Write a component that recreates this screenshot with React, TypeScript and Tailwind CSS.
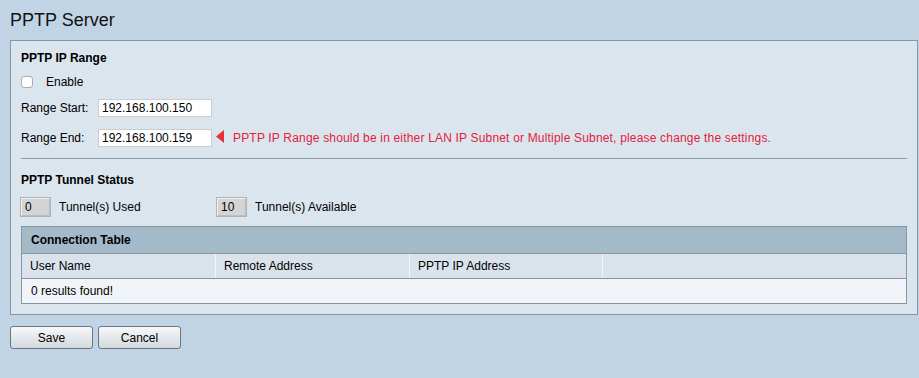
import React from "react";

const font = { fontFamily: '"Liberation Sans", Arial, Helvetica, sans-serif' };

function TextInput({ value }: { value: string }) {
  return (
    <div className="w-[114px] h-[18px] bg-white border border-[#c9cdd1] flex items-center pl-[3px] text-[12px] leading-[14px] text-black">
      {value}
    </div>
  );
}

function ReadBox({ value }: { value: string }) {
  return (
    <div className="w-[29px] h-[18px] bg-[#d4d4d4] border border-[#b9bec3] border-t-[#f2f2f2] border-l-[#f2f2f2] outline outline-1 outline-[#aeb4ba] flex items-center pl-[3px] text-[12px] leading-[14px] text-black">
      {value}
    </div>
  );
}

function Btn({ label }: { label: string }) {
  return (
    <button className="w-[83px] h-[23px] rounded-[3px] border border-[#6b7680] bg-gradient-to-b from-[#f7f8f9] to-[#d3d9de] text-[12px] leading-[14px] text-black">
      {label}
    </button>
  );
}

export default function App() {
  return (
    <div style={font} className="w-[919px] h-[378px] bg-[#c1d4e5] overflow-hidden">
      <h1 className="pl-[10px] pt-[11px] text-[18px] leading-[18px] text-[#111] font-normal">PPTP Server</h1>

      <div className="mt-[11px] ml-[10px] w-[908px] border border-[#8796a2] bg-[#dbe5ee] px-[10px] pt-[10px] pb-[10px] flex flex-col">
        <div className="h-[14px] text-[12px] leading-[14px] font-bold text-black">PPTP IP Range</div>

        <div className="mt-[7px] h-[20px] flex items-center text-[12px] leading-[14px] text-black">
          <div className="w-[12px] h-[12px] bg-white border border-[#a8aeb3] rounded-[3px]" />
          <span className="ml-[13px]">Enable</span>
        </div>

        <div className="mt-[6px] h-[20px] flex items-center text-[12px] leading-[14px] text-black">
          <span className="w-[77px]">Range Start:</span>
          <TextInput value="192.168.100.150" />
        </div>

        <div className="mt-[10px] h-[20px] flex items-center text-[12px] leading-[14px] text-black">
          <span className="w-[77px]">Range End:</span>
          <TextInput value="192.168.100.159" />
          <svg width="8" height="13" viewBox="0 0 8 13" className="ml-[4px] -mt-[4px]">
            <polygon points="8,0 8,13 0,6.5" fill="#e3313e" />
          </svg>
          <span className="ml-[9px] text-[#e4203c] tracking-[0.18px]">
            PPTP IP Range should be in either LAN IP Subnet or Multiple Subnet, please change the settings.
          </span>
        </div>

        <div className="mt-[10px] h-px bg-[#8c9ba6]" />

        <div className="mt-[14px] h-[14px] text-[12px] leading-[14px] font-bold text-black">PPTP Tunnel Status</div>

        <div className="mt-[10px] h-[20px] flex items-center text-[12px] leading-[14px] text-black">
          <ReadBox value="0" />
          <span className="ml-[9px] w-[158px]">Tunnel(s) Used</span>
          <ReadBox value="10" />
          <span className="ml-[9px]">Tunnel(s) Available</span>
        </div>

        <div className="mt-[9px] border border-[#8796a2] flex flex-col text-[12px] leading-[14px] text-black">
          <div className="h-[27px] bg-[#a4bac8] flex items-center pl-[9px] font-bold border-b border-[#8796a2]">
            Connection Table
          </div>
          <div className="h-[25px] bg-[#dae3eb] flex border-b border-[#8796a2]">
            <div className="w-[194px] flex items-center pl-[8px] border-r border-[#f3f6f9]">User Name</div>
            <div className="w-[194px] flex items-center pl-[8px] border-r border-[#f3f6f9]">Remote Address</div>
            <div className="w-[193px] flex items-center pl-[8px] border-r border-[#f3f6f9]">PPTP IP Address</div>
            <div className="flex-1" />
          </div>
          <div className="h-[24px] bg-[#f1f5f9] flex items-center pl-[9px]">0 results found!</div>
        </div>
      </div>

      <div className="mt-[11px] ml-[10px] flex gap-[5px]">
        <Btn label="Save" />
        <Btn label="Cancel" />
      </div>
    </div>
  );
}
